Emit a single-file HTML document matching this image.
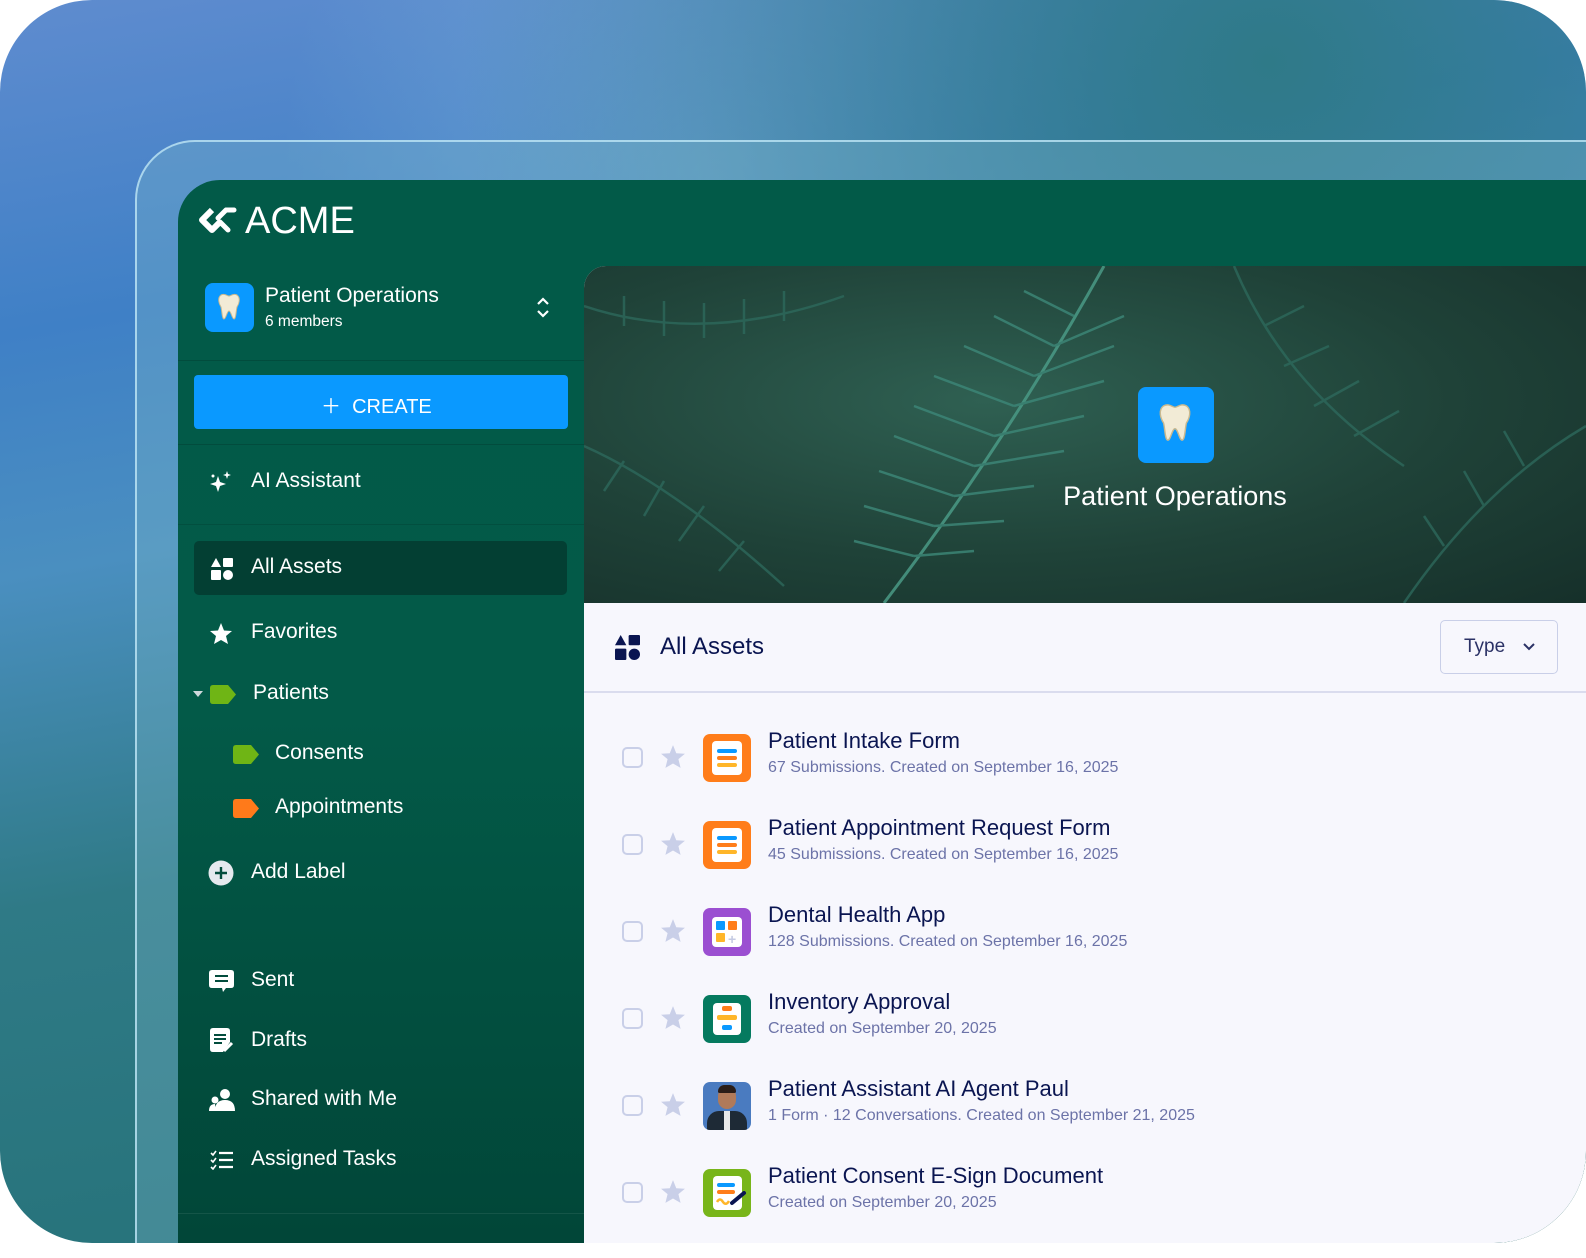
<!DOCTYPE html>
<html><head><meta charset="utf-8"><style>
*{margin:0;padding:0;box-sizing:border-box}
html,body{width:1586px;height:1258px;overflow:hidden}
body{background:#fff;position:relative;font-family:"Liberation Sans",sans-serif}
.wrap{position:absolute;left:0;top:0;width:1586px;height:1243px;border-radius:92px;overflow:hidden;
background:linear-gradient(170deg,#5f8ccf 0%,#3f80c6 22%,#4a8fc0 38%,#2f7a86 60%,#226f74 100%)}
.glow{position:absolute;inset:0;background:radial-gradient(ellipse at 80% 5%,#2f7a88 0%,rgba(47,122,136,0) 45%),radial-gradient(ellipse at 45% 15%,rgba(140,190,220,.5) 0%,rgba(140,190,220,0) 35%)}
.frame{position:absolute;left:135px;top:140px;width:1451px;height:1103px;border-radius:60px 0 0 0;border:2px solid rgba(190,230,245,.8);border-right:none;border-bottom:none;background:rgba(120,180,200,.35)}
.app{position:absolute;left:178px;top:180px;width:1408px;height:1063px;border-radius:42px 0 0 0;background:linear-gradient(180deg,#025a48 0%,#035a48 50%,#014638 100%);overflow:hidden}
.t{color:#fff;position:absolute;white-space:nowrap}
.content{position:absolute;left:584px;top:266px;width:1002px;height:977px;border-radius:22px 0 0 0;overflow:hidden;background:#f7f7fd}
.hero{position:absolute;left:0;top:0;width:1002px;height:337px;background:radial-gradient(ellipse at 40% 40%,#2f6052 0%,#1f4238 55%,#16302a 100%)}
.row{position:absolute;left:0;width:1002px;height:80px}
.cb{position:absolute;left:38px;top:15px;width:21px;height:21px;border:2px solid #c9cfe8;border-radius:5px}
.st{position:absolute;left:76px;top:12px}
.ic{position:absolute;left:119px;top:2px;width:48px;height:48px;border-radius:7px}
.ti{position:absolute;left:184px;top:-4px;font-size:22px;color:#0a1551;white-space:nowrap}
.su{position:absolute;left:184px;top:27px;font-size:16px;color:#6c73a8;white-space:nowrap}
.si{font-size:21px}
</style></head><body>
<div class="wrap">
<div class="glow"></div>
<div class="frame"></div>
<div class="app">
 <svg style="position:absolute;left:20px;top:26px" width="40" height="30" viewBox="0 0 40 30"><path d="M14 4 L4 14 L14 24 L22 16" fill="none" stroke="#fff" stroke-width="6" stroke-linejoin="round"/><path d="M20 12 L28 4 M22 16 L30 24 M28 4 L36 4" fill="none" stroke="#fff" stroke-width="5" stroke-linecap="round"/></svg>
 <div class="t" style="left:67px;top:20px;font-size:38px">ACME</div>
 <div style="position:absolute;left:27px;top:103px;width:49px;height:49px;border-radius:8px;background:#0a99ff"></div>
 <svg style="position:absolute;left:39px;top:113px" width="24" height="28" viewBox="0 0 24 28"><path d="M4 2 C8 0 10 3 12 3 C14 3 16 0 20 2 C24 5 22 11 20 14 C19 18 19 26 17 26 C15 26 14 18 12 18 C10 18 9 26 7 26 C5 26 5 18 4 14 C2 11 0 5 4 2Z" fill="#f2ebd6" stroke="#c9b98f" stroke-width="1"/></svg>
 <div class="t" style="left:87px;top:104px;font-size:21px">Patient Operations</div>
 <div class="t" style="left:87px;top:133px;font-size:15.5px">6 members</div>
 <svg style="position:absolute;left:357px;top:116px" width="16" height="24" viewBox="0 0 16 24"><path d="M3 8 L8 3 L13 8 M3 15 L8 20 L13 15" fill="none" stroke="#fff" stroke-width="2.2"/></svg>
 <div style="position:absolute;left:0;top:180px;width:406px;height:1px;background:rgba(0,0,0,.15)"></div>
 <div style="position:absolute;left:16px;top:195px;width:374px;height:54px;border-radius:4px;background:#0a99ff"></div>
 <div class="t" style="left:143px;top:210px;font-size:20px">＋&nbsp; CREATE</div>
 <div style="position:absolute;left:0;top:264px;width:406px;height:1px;background:rgba(0,0,0,.15)"></div>
 <svg style="position:absolute;left:31px;top:290px" width="24" height="24" viewBox="0 0 24 24" fill="#fff"><path d="M9 6 L11 12 L17 14 L11 16 L9 22 L7 16 L1 14 L7 12Z"/><path d="M18 1 L19 4 L22 5 L19 6 L18 9 L17 6 L14 5 L17 4Z"/><circle cx="4" cy="6" r="1.5"/></svg>
 <div class="t si" style="left:73px;top:289px">AI Assistant</div>
 <div style="position:absolute;left:0;top:344px;width:406px;height:1px;background:rgba(0,0,0,.12)"></div>
 <div style="position:absolute;left:16px;top:361px;width:373px;height:54px;border-radius:5px;background:#033f33"></div>
 <svg style="position:absolute;left:33px;top:378px" width="22" height="22" viewBox="0 0 22 22" fill="#fff"><path d="M5 0 L10 9 L0 9Z"/><rect x="12" y="0" width="10" height="9" rx="1"/><rect x="0" y="12" width="10" height="10" rx="1"/><circle cx="17" cy="17" r="5"/></svg>
 <div class="t si" style="left:73px;top:375px">All Assets</div>
 <svg style="position:absolute;left:31px;top:442px" width="24" height="24" viewBox="0 0 24 24"><path d="M12 1 L15 8.5 L23 9 L17 14 L19 22 L12 18 L5 22 L7 14 L1 9 L9 8.5Z" fill="#fff"/></svg>
 <div class="t si" style="left:73px;top:440px">Favorites</div>
 <svg style="position:absolute;left:15px;top:510px" width="10" height="8"><path d="M0 1 L10 1 L5 7Z" fill="#cfd8dc"/></svg>
 <svg style="position:absolute;left:32px;top:505px" width="26" height="19"><path d="M3 0 H18 L26 9.5 L18 19 H3 Q0 19 0 16 V3 Q0 0 3 0Z" fill="#6fb515"/></svg>
 <div class="t si" style="left:75px;top:501px">Patients</div>
 <svg style="position:absolute;left:55px;top:565px" width="26" height="19"><path d="M3 0 H18 L26 9.5 L18 19 H3 Q0 19 0 16 V3 Q0 0 3 0Z" fill="#6fb515"/></svg>
 <div class="t si" style="left:97px;top:561px">Consents</div>
 <svg style="position:absolute;left:55px;top:619px" width="26" height="19"><path d="M3 0 H18 L26 9.5 L18 19 H3 Q0 19 0 16 V3 Q0 0 3 0Z" fill="#ff7a1a"/></svg>
 <div class="t si" style="left:97px;top:615px">Appointments</div>
 <svg style="position:absolute;left:30px;top:680px" width="26" height="26"><circle cx="13" cy="13" r="12.5" fill="#e5e9ee"/><path d="M13 7 V19 M7 13 H19" stroke="#034b3c" stroke-width="2.4"/></svg>
 <div class="t si" style="left:73px;top:680px">Add Label</div>
 <svg style="position:absolute;left:31px;top:790px" width="26" height="24" viewBox="0 0 26 24"><path d="M3 0 H22 Q25 0 25 3 V15 Q25 18 22 18 H17 L14 22 L13 18 H3 Q0 18 0 15 V3 Q0 0 3 0Z" fill="#fff"/><path d="M6 6 H19 M6 11 H19" stroke="#024c3d" stroke-width="2"/></svg>
 <div class="t si" style="left:73px;top:788px">Sent</div>
 <svg style="position:absolute;left:32px;top:848px" width="24" height="26" viewBox="0 0 24 26"><path d="M3 0 H17 Q20 0 20 3 V14 L13 24 H3 Q0 24 0 21 V3 Q0 0 3 0Z" fill="#fff"/><path d="M4 7 H16 M4 11 H16 M4 15 H12" stroke="#024c3d" stroke-width="2"/><path d="M14 23 L22 15" stroke="#fff" stroke-width="3"/></svg>
 <div class="t si" style="left:73px;top:848px">Drafts</div>
 <svg style="position:absolute;left:31px;top:909px" width="26" height="22" viewBox="0 0 26 22" fill="#fff"><circle cx="16" cy="5" r="5"/><path d="M6 22 Q6 11 16 11 Q26 11 26 22Z"/><circle cx="6" cy="11" r="3.5"/><path d="M0 22 Q0 15 6 15 L7 22Z"/></svg>
 <div class="t si" style="left:73px;top:907px">Shared with Me</div>
 <svg style="position:absolute;left:32px;top:970px" width="24" height="20" viewBox="0 0 24 20"><path d="M1 3 L3 5 L6 1 M1 10 L3 12 L6 8 M1 17 L3 19 L6 15" stroke="#fff" stroke-width="1.6" fill="none"/><path d="M9 3 H23 M9 10 H23 M9 17 H23" stroke="#fff" stroke-width="2.2"/></svg>
 <div class="t si" style="left:73px;top:967px">Assigned Tasks</div>
 <div style="position:absolute;left:0;top:1033px;width:406px;height:1px;background:rgba(255,255,255,.08)"></div>
</div>
<div class="content">
 <div class="hero">
  <svg width="1002" height="337" viewBox="0 0 1002 337" style="position:absolute;left:0;top:0">
   <g stroke="#3c8576" stroke-width="2.5" fill="none" opacity=".85">
    <path d="M300 337 Q420 180 520 0" stroke="#4a9a86" stroke-width="3"/>
    <path d="M330 290 l-60 -15 M350 260 l-70 -20 M370 230 l-75 -25 M390 200 l-80 -30 M410 170 l-80 -30 M430 140 l-80 -30 M450 110 l-70 -30 M470 80 l-60 -30 M490 50 l-50 -25"/>
    <path d="M330 290 l60 -5 M350 260 l70 -5 M370 230 l80 -10 M390 200 l90 -15 M410 170 l90 -20 M430 140 l90 -25 M450 110 l80 -30 M470 80 l70 -30"/>
   </g>
   <g stroke="#2e6b5e" stroke-width="2.5" fill="none" opacity=".75">
    <path d="M0 40 Q120 80 260 30"/><path d="M40 60 l0 -30 M80 70 l0 -35 M120 72 l0 -35 M160 68 l0 -35 M200 55 l0 -30"/>
    <path d="M0 180 Q90 220 200 320"/><path d="M40 195 l-20 30 M80 215 l-20 35 M120 240 l-25 35 M160 275 l-25 30"/>
    <path d="M650 0 Q700 120 820 200"/><path d="M680 60 l40 -20 M700 100 l45 -20 M730 140 l45 -25 M770 170 l45 -25"/>
    <path d="M820 337 Q900 220 1002 160"/><path d="M860 280 l-20 -30 M900 240 l-20 -35 M940 200 l-20 -35"/>
   </g>
  </svg>
  <div style="position:absolute;left:554px;top:121px;width:76px;height:76px;border-radius:8px;background:#0a99ff"></div>
  <svg style="position:absolute;left:572px;top:137px" width="38" height="40" viewBox="0 0 24 28"><path d="M4 2 C8 0 10 3 12 3 C14 3 16 0 20 2 C24 5 22 11 20 14 C19 18 19 26 17 26 C15 26 14 18 12 18 C10 18 9 26 7 26 C5 26 5 18 4 14 C2 11 0 5 4 2Z" fill="#f2ebd6" stroke="#c9b98f" stroke-width="1"/></svg>
  <div class="t" style="left:0;width:1182px;text-align:center;top:215px;font-size:27px">Patient Operations</div>
 </div>
 <svg style="position:absolute;left:31px;top:369px" width="25" height="25" viewBox="0 0 22 22" fill="#0a1551"><path d="M5 0 L10 9 L0 9Z"/><rect x="12" y="0" width="10" height="9" rx="1"/><rect x="0" y="12" width="10" height="10" rx="1"/><circle cx="17" cy="17" r="5"/></svg>
 <div style="position:absolute;left:76px;top:367px;font-size:24px;color:#0a1551">All Assets</div>
 <div style="position:absolute;left:856px;top:354px;width:118px;height:54px;border:1.5px solid #c9cfe8;border-radius:5px;background:#f7f7fd"></div>
 <div style="position:absolute;left:880px;top:370px;font-size:19px;color:#2b3266">Type</div>
 <svg style="position:absolute;left:939px;top:377px" width="12" height="8"><path d="M1 1 L6 6 L11 1" stroke="#2b3266" stroke-width="2" fill="none"/></svg>
 <div style="position:absolute;left:0;top:425px;width:1002px;height:2px;background:#dadcee"></div>

 <div class="row" style="top:466px"><div class="cb"></div><svg class="st" width="26" height="26" viewBox="0 0 24 24"><path d="M12 1 L15 8.5 L23 9 L17 14 L19 22 L12 18 L5 22 L7 14 L1 9 L9 8.5Z" fill="#c9cfe8"/></svg>
  <div class="ic" style="background:#ff7d1a"><div style="position:absolute;left:9px;top:7px;width:30px;height:34px;border-radius:4px;background:#fff"></div><div style="position:absolute;left:14px;top:15px;width:20px;height:4px;border-radius:2px;background:#0a99ff"></div><div style="position:absolute;left:14px;top:22px;width:20px;height:4px;border-radius:2px;background:#ff7d1a"></div><div style="position:absolute;left:14px;top:29px;width:20px;height:4px;border-radius:2px;background:#ffb629"></div></div>
  <div class="ti">Patient Intake Form</div><div class="su">67 Submissions. Created on September 16, 2025</div></div>

 <div class="row" style="top:553px"><div class="cb"></div><svg class="st" width="26" height="26" viewBox="0 0 24 24"><path d="M12 1 L15 8.5 L23 9 L17 14 L19 22 L12 18 L5 22 L7 14 L1 9 L9 8.5Z" fill="#c9cfe8"/></svg>
  <div class="ic" style="background:#ff7d1a"><div style="position:absolute;left:9px;top:7px;width:30px;height:34px;border-radius:4px;background:#fff"></div><div style="position:absolute;left:14px;top:15px;width:20px;height:4px;border-radius:2px;background:#0a99ff"></div><div style="position:absolute;left:14px;top:22px;width:20px;height:4px;border-radius:2px;background:#ff7d1a"></div><div style="position:absolute;left:14px;top:29px;width:20px;height:4px;border-radius:2px;background:#ffb629"></div></div>
  <div class="ti">Patient Appointment Request Form</div><div class="su">45 Submissions. Created on September 16, 2025</div></div>

 <div class="row" style="top:640px"><div class="cb"></div><svg class="st" width="26" height="26" viewBox="0 0 24 24"><path d="M12 1 L15 8.5 L23 9 L17 14 L19 22 L12 18 L5 22 L7 14 L1 9 L9 8.5Z" fill="#c9cfe8"/></svg>
  <div class="ic" style="background:#9b4fd1"><div style="position:absolute;left:9px;top:9px;width:30px;height:30px;border-radius:4px;background:#fff"></div><div style="position:absolute;left:13px;top:13px;width:9px;height:9px;background:#0a99ff;border-radius:1px"></div><div style="position:absolute;left:25px;top:13px;width:9px;height:9px;background:#ff7d1a;border-radius:1px"></div><div style="position:absolute;left:13px;top:25px;width:9px;height:9px;background:#ffb629;border-radius:1px"></div><div style="position:absolute;left:25px;top:23px;color:#c5cbe3;font-size:14px;font-weight:bold">+</div></div>
  <div class="ti">Dental Health App</div><div class="su">128 Submissions. Created on September 16, 2025</div></div>

 <div class="row" style="top:727px"><div class="cb"></div><svg class="st" width="26" height="26" viewBox="0 0 24 24"><path d="M12 1 L15 8.5 L23 9 L17 14 L19 22 L12 18 L5 22 L7 14 L1 9 L9 8.5Z" fill="#c9cfe8"/></svg>
  <div class="ic" style="background:#057a5f"><div style="position:absolute;left:10px;top:8px;width:28px;height:32px;border-radius:4px;background:#fff"></div><div style="position:absolute;left:19px;top:11px;width:10px;height:5px;border-radius:2px;background:#ff7d1a"></div><div style="position:absolute;left:14px;top:20px;width:20px;height:5px;border-radius:2px;background:#ffb629"></div><div style="position:absolute;left:19px;top:30px;width:10px;height:5px;border-radius:2px;background:#0a99ff"></div></div>
  <div class="ti">Inventory Approval</div><div class="su">Created on September 20, 2025</div></div>

 <div class="row" style="top:814px"><div class="cb"></div><svg class="st" width="26" height="26" viewBox="0 0 24 24"><path d="M12 1 L15 8.5 L23 9 L17 14 L19 22 L12 18 L5 22 L7 14 L1 9 L9 8.5Z" fill="#c9cfe8"/></svg>
  <div class="ic" style="background:#4a7bc0;overflow:hidden"><div style="position:absolute;left:15px;top:5px;width:18px;height:22px;border-radius:9px;background:#b07a5a"></div><div style="position:absolute;left:15px;top:3px;width:18px;height:8px;border-radius:8px 8px 2px 2px;background:#2a1d18"></div><div style="position:absolute;left:4px;top:29px;width:40px;height:19px;border-radius:12px 12px 0 0;background:#1e2a36"></div><div style="position:absolute;left:21px;top:29px;width:6px;height:19px;background:#e8e8e8"></div></div>
  <div class="ti">Patient Assistant AI Agent Paul</div><div class="su">1 Form · 12 Conversations. Created on September 21, 2025</div></div>

 <div class="row" style="top:901px"><div class="cb"></div><svg class="st" width="26" height="26" viewBox="0 0 24 24"><path d="M12 1 L15 8.5 L23 9 L17 14 L19 22 L12 18 L5 22 L7 14 L1 9 L9 8.5Z" fill="#c9cfe8"/></svg>
  <div class="ic" style="background:#78b51a"><div style="position:absolute;left:10px;top:7px;width:29px;height:34px;border-radius:4px;background:#fff"></div><div style="position:absolute;left:14px;top:14px;width:18px;height:4px;border-radius:2px;background:#0a99ff"></div><div style="position:absolute;left:14px;top:21px;width:18px;height:4px;border-radius:2px;background:#ff7d1a"></div><svg style="position:absolute;left:13px;top:22px" width="32" height="16"><path d="M1 11 Q4 6 7 11 Q10 15 13 10" stroke="#ffb629" stroke-width="2.5" fill="none"/><path d="M16 12 L28 2" stroke="#0a1551" stroke-width="4" stroke-linecap="round"/></svg></div>
  <div class="ti">Patient Consent E-Sign Document</div><div class="su">Created on September 20, 2025</div></div>
</div>
</div>
</body></html>
